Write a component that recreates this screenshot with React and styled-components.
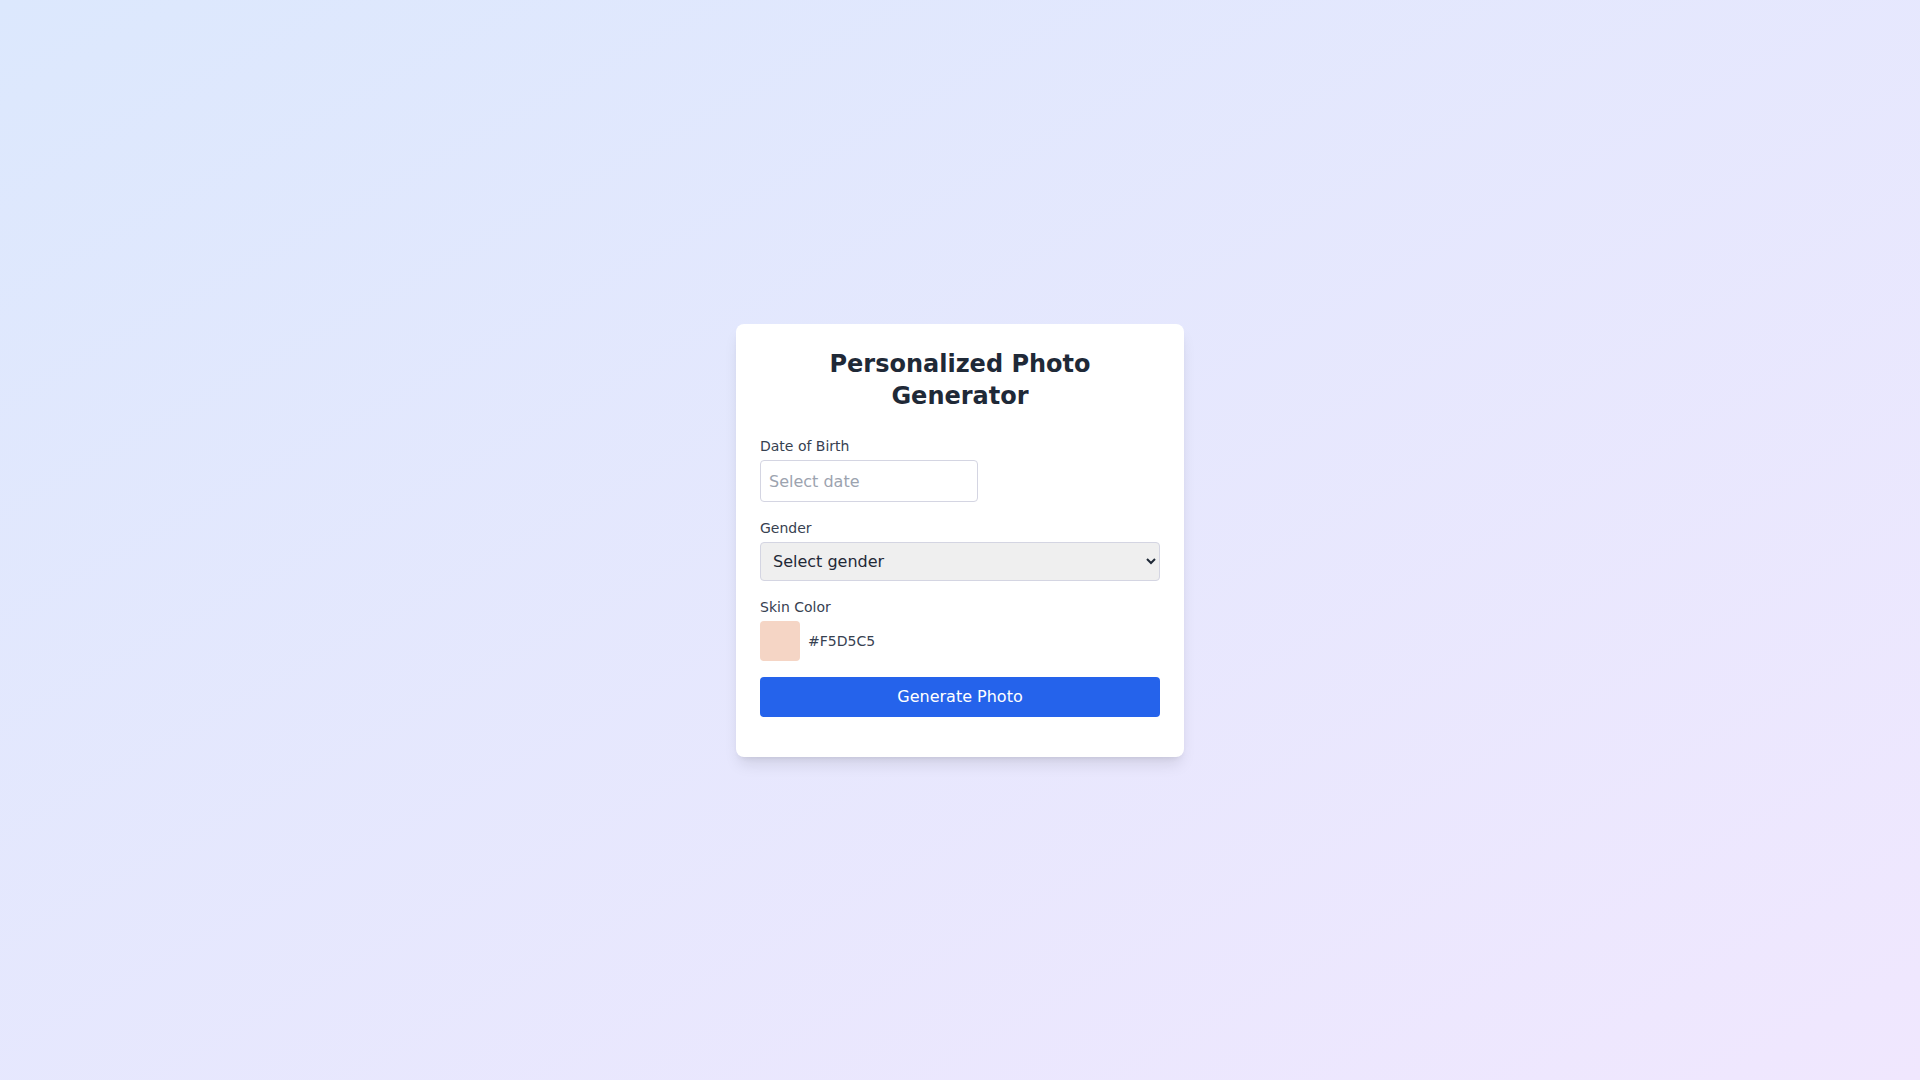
import React, { useState } from "react";
import styled, { createGlobalStyle } from "styled-components";

const GlobalStyle = createGlobalStyle`
    * { box-sizing: border-box; }
    html, body {
        margin: 0;
        padding: 0;
        font-family: "DejaVu Sans", "Noto Sans", sans-serif;
    }
`;

// full page background with the soft blue -> lavender gradient
const Page = styled.div`
    min-height: 100vh;
    display: flex;
    align-items: center;
    justify-content: center;
    background: linear-gradient(to bottom right, #dce8fd, #f0e7fe);
`;

const Card = styled.div`
    width: 448px;
    margin-top: 1px;
    background: #ffffff;
    border-radius: 8px;
    padding: 24px;
    box-shadow: 0 10px 15px -3px rgba(0, 0, 0, 0.1), 0 4px 6px -4px rgba(0, 0, 0, 0.1);
`;

const Title = styled.h1`
    margin: 0 0 24px 0;
    font-size: 24px;
    line-height: 32px;
    font-weight: 700;
    text-align: center;
    color: #1f2937;
`;

const Field = styled.div`
    margin-bottom: 16px;
`;

const Label = styled.label`
    display: block;
    margin-bottom: 4px;
    font-size: 14px;
    line-height: 20px;
    color: #374151;
`;

const DateInput = styled.input`
    display: block;
    width: 218px;
    height: 42px;
    padding: 8px;
    font-family: inherit;
    font-size: 16px;
    line-height: 24px;
    color: #1f2937;
    border: 1px solid #d4d5e2;
    border-radius: 4px;
    background: #fff;
    outline: none;

    &::placeholder {
        color: #9ca3af;
    }
`;

const Select = styled.select`
    display: block;
    width: 100%;
    height: 39px;
    padding: 0 8px;
    font-family: inherit;
    font-size: 16px;
    color: #1f2937;
    background-color: #efefef;
    border: 1px solid #d4d5e2;
    border-radius: 4px;
`;

const SwatchRow = styled.div`
    display: flex;
    align-items: center;
    gap: 8px;
`;

const Swatch = styled.div`
    width: 40px;
    height: 40px;
    border-radius: 4px;
    background: ${(p) => p.color};
`;

const HexText = styled.span`
    font-size: 14px;
    line-height: 20px;
    color: #374151;
`;

const Button = styled.button`
    display: block;
    width: 100%;
    height: 40px;
    margin-bottom: 16px;
    border: none;
    border-radius: 4px;
    background: #2563eb;
    color: #ffffff;
    font-family: inherit;
    font-size: 16px;
    line-height: 24px;
    cursor: pointer;
`;

export default function App() {
    const [date, setDate] = useState("");
    const [gender, setGender] = useState("");
    const skin = "#F5D5C5";

    return (
        <Page>
            <GlobalStyle />
            <Card>
                <Title>Personalized Photo Generator</Title>
                <Field>
                    <Label>Date of Birth</Label>
                    <DateInput
                        type="text"
                        placeholder="Select date"
                        value={date}
                        onChange={(e) => setDate(e.target.value)}
                    />
                </Field>
                <Field>
                    <Label>Gender</Label>
                    <Select value={gender} onChange={(e) => setGender(e.target.value)}>
                        <option value="">Select gender</option>
                        <option value="male">Male</option>
                        <option value="female">Female</option>
                    </Select>
                </Field>
                <Field>
                    <Label>Skin Color</Label>
                    <SwatchRow>
                        <Swatch color={skin} />
                        <HexText>{skin}</HexText>
                    </SwatchRow>
                </Field>
                <Button>Generate Photo</Button>
            </Card>
        </Page>
    );
}
